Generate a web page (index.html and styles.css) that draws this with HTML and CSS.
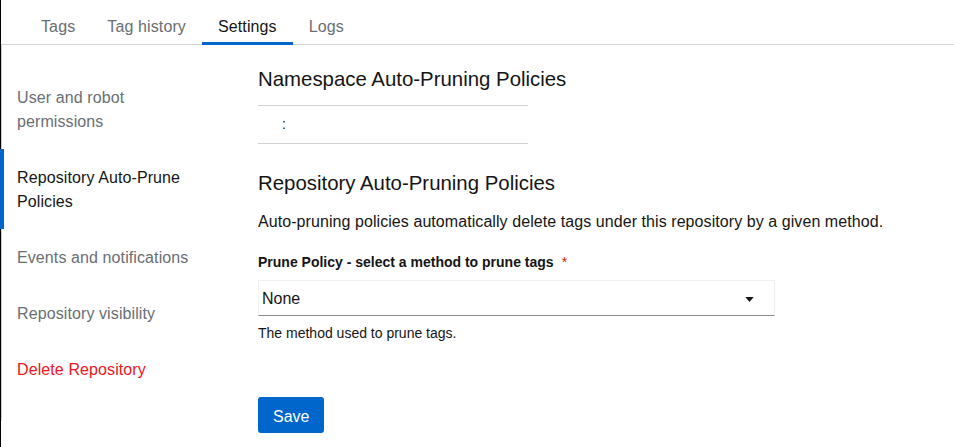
FILE: index.html
```html
<!DOCTYPE html>
<html lang="en">
<head>
<meta charset="utf-8">
<title>Repository settings</title>
<link rel="stylesheet" href="styles.css">
</head>
<body>
<div class="page">
  <nav class="tabs">
    <a class="tab">Tags</a>
    <a class="tab">Tag history</a>
    <a class="tab tab-active">Settings</a>
    <a class="tab">Logs</a>
  </nav>
  <div class="layout">
    <aside class="sidebar">
      <ul class="side-list">
        <li class="side-item">User and robot permissions</li>
        <li class="side-item side-active">Repository Auto-Prune Policies</li>
        <li class="side-item">Events and notifications</li>
        <li class="side-item">Repository visibility</li>
        <li class="side-item side-danger">Delete Repository</li>
      </ul>
    </aside>
    <main class="content">
      <h2 class="title">Namespace Auto-Pruning Policies</h2>
      <div class="ns-table">
        <div class="ns-row"><span class="ns-key"></span><span class="ns-sep">:</span></div>
      </div>
      <h2 class="title title-repo">Repository Auto-Pruning Policies</h2>
      <p class="desc">Auto-pruning policies automatically delete tags under this repository by a given method.</p>
      <div class="form-group">
        <label class="label">Prune Policy - select a method to prune tags<span class="req">*</span></label>
        <div class="select">
          <span class="select-value">None</span>
          <svg class="caret" width="10" height="6" viewBox="0 0 10 6"><path d="M0 0 H10 L5 6 Z" fill="#151515"/></svg>
        </div>
        <div class="helper">The method used to prune tags.</div>
      </div>
      <button class="btn-save">Save</button>
    </main>
  </div>
</div>
</body>
</html>
```

FILE: styles.css
```css
* { box-sizing: border-box; }
html, body {
  margin: 0;
  padding: 0;
  background: #fff;
}
body {
  font-family: "Liberation Sans", Arial, sans-serif;
  color: #151515;
  font-size: 16px;
}
.page {
  border-left: 1px solid #000;
  min-height: 447px;
}
.tabs {
  display: flex;
  height: 45px;
  padding-left: 24px;
  border-bottom: 1px solid #d2d2d2;
}
.tab {
  position: relative;
  display: block;
  height: 44px;
  padding: 15px 16px 0;
  line-height: 24px;
  font-size: 16px;
  letter-spacing: 0.12px;
  color: #6a6e73;
  cursor: pointer;
}
.tab-active {
  color: #151515;
}
.tab-active::after {
  content: "";
  position: absolute;
  left: 0;
  right: 0;
  bottom: -1px;
  height: 3px;
  background: #06c;
}
.layout {
  display: flex;
  align-items: flex-start;
}
.sidebar {
  width: 225px;
  flex: 0 0 225px;
  border-left: 1px solid #d2d2d2;
  padding: 24px 0;
}
.side-list {
  list-style: none;
  margin: 0;
  padding: 0;
}
.side-item {
  position: relative;
  padding: 17px 24px 15px 15px;
  line-height: 24px;
  font-size: 16px;
  letter-spacing: 0.1px;
  color: #6a6e73;
}
.side-active {
  color: #151515;
}
.side-active::before {
  content: "";
  position: absolute;
  left: -2px;
  top: 0;
  bottom: 0;
  width: 4px;
  background: #06c;
}
.side-danger {
  color: #f0141e;
}
.content {
  flex: 1;
  padding: 19px 0 0 32px;
}
.title {
  margin: 0;
  font-size: 20.4px;
  font-weight: 400;
  line-height: 30px;
  color: #151515;
}
.ns-table {
  width: 270px;
  margin-top: 11px;
  border-top: 1px solid #d2d2d2;
  border-bottom: 1px solid #d2d2d2;
}
.ns-row {
  display: flex;
  padding: 8px 0 8px 24px;
  line-height: 21px;
  font-size: 14px;
}
.title-repo {
  margin-top: 24px;
}
.desc {
  margin: 12px 0 0;
  line-height: 24px;
  font-size: 16px;
  letter-spacing: 0.07px;
}
.form-group {
  margin-top: 18px;
  width: 517px;
}
.label {
  display: block;
  font-size: 14px;
  font-weight: 700;
  line-height: 21px;
  margin-bottom: 7px;
}
.req {
  color: #c9190b;
  margin-left: 8px;
  font-weight: 400;
}
.select {
  display: flex;
  align-items: center;
  justify-content: space-between;
  height: 36px;
  padding: 2px 20px 0 3px;
  border: 1px solid #f0f0f0;
  border-bottom-color: #8a8d90;
}
.select-value {
  font-size: 16px;
  line-height: 24px;
}
.caret {
  display: block;
  width: 9px;
  height: 5px;
}
.helper {
  margin-top: 7px;
  font-size: 14px;
  line-height: 21px;
}
.btn-save {
  display: block;
  margin-top: 53px;
  height: 36px;
  padding: 3px 15px 0;
  border: 0;
  border-radius: 3px;
  background: #06c;
  color: #fff;
  font-family: "Liberation Sans", Arial, sans-serif;
  font-size: 16px;
  line-height: 24px;
  cursor: pointer;
}
```
